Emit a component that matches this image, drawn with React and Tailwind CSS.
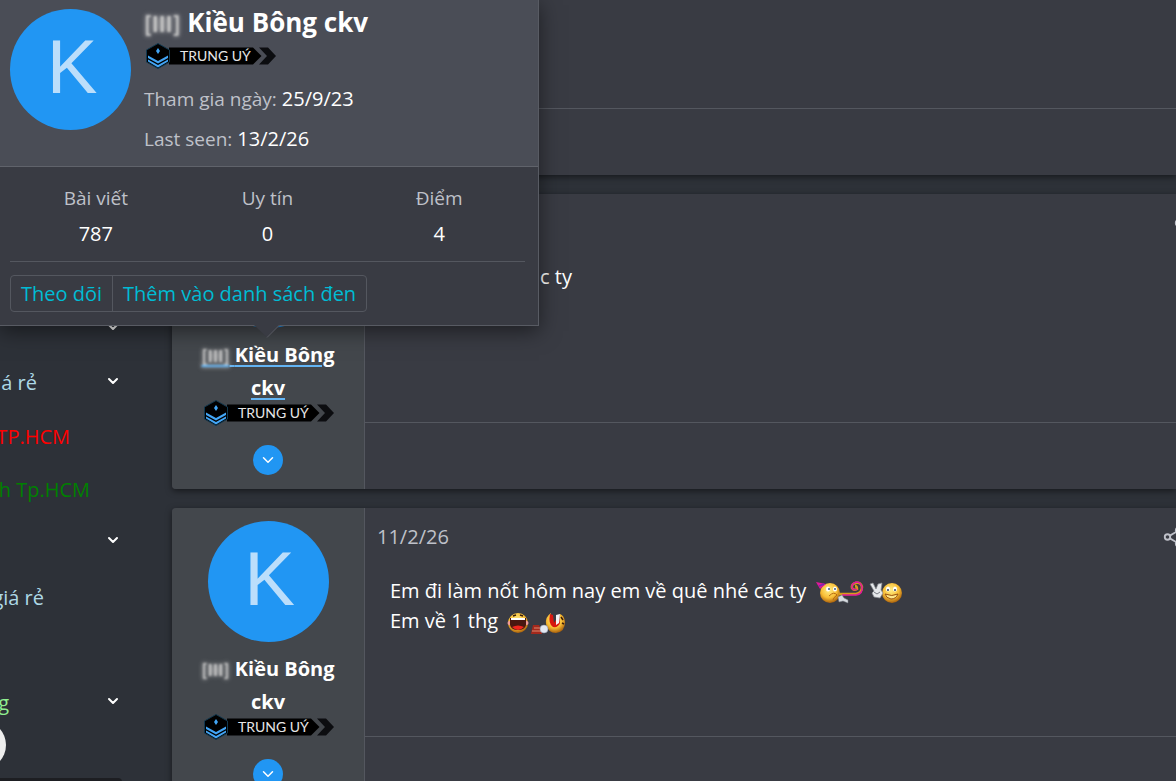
import { ChevronDown, Share2 } from 'lucide-react';

const MEMBER = {
  name: 'Kiều Bông ckv',
  initial: 'K',
  tag: '[Ⅲ]',
  rank: 'TRUNG UÝ',
  joined: '25/9/23',
  lastSeen: '13/2/26',
  stats: [
    { label: 'Bài viết', value: '787' },
    { label: 'Uy tín', value: '0' },
    { label: 'Điểm', value: '4' },
  ],
};

const NAV_ITEMS = [
  { label: '', expand: true, row: 'h-[54px]' },
  { label: 'á rẻ', expand: true, row: 'h-[54px]', text: 'w-[37px] text-[#add8e6]' },
  { label: 'TP.HCM', row: 'h-[54px]', text: 'w-[70px] text-[#ff0000]' },
  { label: 'h Tp.HCM', row: 'h-[52px]', text: 'w-[90px] text-[#008000]' },
  { label: '', expand: true, row: 'h-[52px]' },
  { label: 'giá rẻ', row: 'h-[60px]', text: 'w-[44px] text-[#add8e6]' },
  { label: '', row: 'h-12' },
  { label: 'g', expand: true, row: 'h-[54px]', text: 'w-[9px] text-[#90ee90]' },
];

export default function App() {
  return (
    <div className="relative flex h-screen overflow-hidden bg-[#2d3138] font-['Open_Sans',sans-serif] text-xl text-white">
      <Sidebar />

      <main className="flex min-w-0 flex-1 flex-col gap-[19px]">
        <Post className="h-[175px]" />
        <Post className="h-[295px]" member hovered>
          <p className="pl-[150px]">c ty</p>
        </Post>
        <Post className="h-[295px]" member date="11/2/26">
          <p>
            Em đi làm nốt hôm nay em về quê nhé các ty{' '}
            <span className="ml-1">
              <PartySmiley /> <WaveSmiley />
            </span>
          </p>
          <p>
            Em về 1 thg{' '}
            <span className="ml-1">
              <LaughSmiley /> <TeethSmiley />
            </span>
          </p>
        </Post>
      </main>

      <MemberCard />
    </div>
  );
}

function Sidebar() {
  return (
    <nav className="flex w-[172px] shrink-0 flex-col pt-[300px]">
      {NAV_ITEMS.map((item, i) => (
        <div key={i} className={`flex shrink-0 items-center justify-between ${item.row}`}>
          {item.label ? (
            <a href="#forum" className={`flex justify-end whitespace-nowrap pt-1 ${item.text}`}>
              {item.label}
            </a>
          ) : (
            <span />
          )}
          {item.expand && (
            <button aria-label="Mở rộng" className="mr-[51px]">
              <ChevronDown size={16} strokeWidth={3} />
            </button>
          )}
        </div>
      ))}
      <div className="-ml-[42px] -mt-[7px] size-12 shrink-0 rounded-full bg-[#eeeeee]" />
      <div className="mr-[50px] mt-[9px] h-10 shrink-0 rounded-tr bg-[#1d1e22]" />
    </nav>
  );
}

function Post({ className, member, hovered, date, children }) {
  return (
    <article
      className={`flex shrink-0 overflow-hidden rounded-l bg-[#393b43] shadow-[0_2px_6px_0_rgba(0,0,0,0.5)] ${className}`}
    >
      <div className="flex w-[193px] shrink-0 flex-col items-center border-r border-[#54575f] bg-[#43474c] pt-[13px]">
        {member && (
          <>
            <Avatar>{!hovered && MEMBER.initial}</Avatar>
            <a
              href="#member"
              className={`mt-[10px] w-[150px] text-center font-bold leading-[33px] decoration-[#63b4f4] decoration-2 underline-offset-3 ${hovered ? 'underline' : ''}`}
            >
              <Tag /> {MEMBER.name}
            </a>
            <div className="-mt-1">
              <RankBadge />
            </div>
            <button
              aria-label="Xem thêm"
              className="mt-[19px] flex size-[30px] shrink-0 items-center justify-center rounded-full bg-[#2196f3]"
            >
              <ChevronDown size={18} strokeWidth={2} />
            </button>
          </>
        )}
      </div>

      <div className="flex min-w-0 flex-1 flex-col">
        {member && (
          <header className="flex h-11 shrink-0 items-center justify-between pl-3 pt-[14px] leading-[30px] text-[#bfc1c9]">
            <time>{date}</time>
            <button aria-label="Chia sẻ" className={hovered ? '-mr-[19px]' : '-mr-2'}>
              <Share2 size={22} strokeWidth={2} />
            </button>
          </header>
        )}
        <div className="flex-1 pl-[25px] pt-6 leading-[30px]">{children}</div>
        <footer className="h-[67px] shrink-0 border-t border-[#54575f]" />
      </div>
    </article>
  );
}

function MemberCard() {
  return (
    <section className="absolute left-0 top-0 w-[539px] border-b border-r border-[#585b63] bg-[#393b43] shadow-[0_5px_20px_0_rgba(0,0,0,0.5)]">
      <div className="flex h-[167px] gap-[13px] border-b border-[#60636b] bg-[#4a4d56] pl-[10px] pt-[9px]">
        <Avatar>{MEMBER.initial}</Avatar>
        <div className="flex flex-col items-start">
          <h4 className="-mt-1 text-[26px] font-bold leading-[34px]">
            <Tag /> {MEMBER.name}
          </h4>
          <div className="mt-1">
            <RankBadge />
          </div>
          <dl className="mt-[10px] leading-10">
            <div className="flex gap-[5px]">
              <dt className="text-[19px] text-[#bfc1c9]">Tham gia ngày:</dt>
              <dd>{MEMBER.joined}</dd>
            </div>
            <div className="flex gap-[5px]">
              <dt className="text-[19px] text-[#bfc1c9]">Last seen:</dt>
              <dd>{MEMBER.lastSeen}</dd>
            </div>
          </dl>
        </div>
      </div>

      <div className="pb-[13px] pl-[10px] pr-[13px] pt-[14px]">
        <dl className="grid grid-cols-3 pb-[10px] text-center leading-[35px]">
          {MEMBER.stats.map((s) => (
            <div key={s.label}>
              <dt className="text-[19px] text-[#bfc1c9]">{s.label}</dt>
              <dd>{s.value}</dd>
            </div>
          ))}
        </dl>
        <hr className="border-[#54575f]" />
        <div className="mt-[13px] inline-flex divide-x divide-[#54575f] rounded border border-[#54575f] text-[#00bcd4]">
          <button className="px-[10px] leading-[35px]">Theo dõi</button>
          <button className="px-[10px] leading-[35px]">Thêm vào danh sách đen</button>
        </div>
      </div>

      {/* Arrow to the hovered name */}
      <svg viewBox="0 0 26 13" className="absolute left-[254px] top-full h-[13px] w-[26px]">
        <path d="M0 0H26L13 12.500Z" fill="#393b43" />
        <path d="M25.500 0L13 12.500" stroke="#585b63" fill="none" />
      </svg>
    </section>
  );
}

function Avatar({ children }) {
  return (
    <div className="flex size-[121px] shrink-0 items-center justify-center rounded-full bg-[#2196f3] pb-[5px] pl-[3px] font-['Liberation_Sans',sans-serif] text-[76px] leading-none text-[#bbdefb]">
      {children}
    </div>
  );
}

function Tag() {
  return (
    <span className="font-['Noto_Sans_CJK_JP',sans-serif] text-[80%] font-bold leading-none text-[#c4c4c4] blur-[1px] [text-shadow:0_0_4px_#ccc]">
      {MEMBER.tag}
    </span>
  );
}

function RankBadge() {
  return (
    <svg viewBox="0 1 132 26" className="h-[26px] w-[132px]" role="img" aria-label={MEMBER.rank}>
      <path d="M25 5.500H109L117.500 14L109 22.500H25Z" fill="#000" />
      <path d="M115 5.500H124L132 14L124 22.500H115L123 14Z" fill="#0c0d10" />
      <path d="M14 1.500L25.500 8V20L14 26.500L2.500 20V8Z" fill="#000" stroke="#12384f" />
      <path d="M14 6L16 9L14 12L12 9Z" fill="#42a5f5" />
      <path d="M4 13.500L14 19L24 13.500V16L14 21.500L4 16Z" fill="#42a5f5" />
      <path d="M4 17.500L14 23L24 17.500V19.500L14 25.500L4 19.500Z" fill="#42a5f5" />
      <text x="36" y="19" fill="#e6e6e6" fontSize="14" fontFamily="Lato, sans-serif">
        {MEMBER.rank}
      </text>
    </svg>
  );
}

function SmileyFill() {
  return (
    <defs>
      <radialGradient id="smiley" cx="45%" cy="35%" r="65%">
        <stop offset="0" stopColor="#fff08a" />
        <stop offset="0.6" stopColor="#f8bd35" />
        <stop offset="1" stopColor="#a9600c" />
      </radialGradient>
    </defs>
  );
}

function PartySmiley() {
  return (
    <svg viewBox="0 0 48 24" className="inline h-6 w-12 align-middle">
      <SmileyFill />
      <circle cx="14" cy="12" r="10" fill="url(#smiley)" />
      <path d="M0 1L10 3L4 8Z" fill="#e0189a" />
      <path d="M3 5L8 3" stroke="#7a2bb0" strokeWidth="1.500" />
      <ellipse cx="12" cy="8" rx="2" ry="2.500" fill="#fff" />
      <ellipse cx="19" cy="8" rx="2" ry="2.500" fill="#fff" />
      <circle cx="13" cy="8" r="1" fill="#3b5f86" />
      <circle cx="19" cy="8" r="1" fill="#3b5f86" />
      <path d="M13 15Q18 10 21 14Q17 17 17 19" stroke="#b86a10" fill="none" />
      <path d="M23 13H40Q46 12 46 6Q45 1 40 2Q35 3 36 7Q38 10 41 8Q41 5 39 5" stroke="#d99a1c" strokeWidth="2.500" fill="none" />
      <path d="M26 14H40Q47 13 46 6Q45 1 40 1Q35 3 36 7Q38 10 41 8" stroke="#e0189a" strokeWidth="1.500" fill="none" />
      <path d="M22 16L26 14L28 17L32 19L32 22L27 20L23 21Z" fill="#d7dbe0" stroke="#7b7f86" strokeWidth="0.500" />
    </svg>
  );
}

function WaveSmiley() {
  return (
    <svg viewBox="0 0 34 24" className="inline h-6 w-[34px] align-middle">
      <circle cx="23" cy="12" r="10" fill="url(#smiley)" />
      <ellipse cx="19" cy="8" rx="2" ry="2.500" fill="#fff" />
      <ellipse cx="26" cy="8" rx="2" ry="2.500" fill="#fff" />
      <circle cx="19" cy="9" r="1" fill="#33435a" />
      <circle cx="26" cy="9" r="1" fill="#33435a" />
      <path d="M16 13Q23 16 29 13Q27 18 22 18Q17 17 16 13Z" fill="#ffe88a" stroke="#9a5410" />
      <path d="M1 3L4 2L7 8L9 3L13 2L12 9L14 12L11 17L5 16L3 12L5 10Z" fill="#e5e7ea" stroke="#85898f" strokeWidth="0.700" />
      <path d="M5 11L8 13L11 11" stroke="#777b82" fill="none" />
    </svg>
  );
}

function LaughSmiley() {
  return (
    <svg viewBox="0 0 22 24" className="inline h-6 w-[22px] align-middle">
      <circle cx="11" cy="12" r="10" fill="url(#smiley)" />
      <circle cx="2.500" cy="12" r="2" fill="#f09a9a" />
      <circle cx="19.500" cy="12" r="2" fill="#f09a9a" />
      <path d="M6 5L9 4M13 4L16 5" stroke="#3b1d0a" strokeWidth="1.500" />
      <path d="M3 7H19V14Q18 19 11 19Q4 19 3 14Z" fill="#4a1710" />
      <path d="M4 7H18V9H4Z" fill="#fff" />
      <path d="M5 16Q11 13 17 16Q14 19 11 19Q8 19 5 16Z" fill="#f0261c" />
    </svg>
  );
}

function TeethSmiley() {
  return (
    <svg viewBox="0 0 36 24" className="-ml-[5px] inline h-6 w-9 align-middle">
      <path d="M21 2Q15 6 16 13Q18 22 26 22Q35 21 35 11Q34 4 30 3L29 12L24 15Q19 13 21 2Z" fill="url(#smiley)" />
      <path d="M20 3L23 4L24 12L29 4L30 12Q28 17 23 16Q18 13 20 3Z" fill="#d8170f" />
      <path d="M26 4L30 3L29 12L26 14Z" fill="#f4f4f4" />
      <path d="M31 6L33 9M32 12L34 13" stroke="#3b1d0a" strokeWidth="1.500" />
      <path d="M3 14H9L11 18L12 23H1L2 18Z" fill="#a3281c" />
      <path d="M4 17H10M2 20H11" stroke="#d98a70" />
      <ellipse cx="14" cy="18" rx="4" ry="4" fill="#e3e8f2" stroke="#8d97ab" strokeWidth="0.500" />
    </svg>
  );
}
